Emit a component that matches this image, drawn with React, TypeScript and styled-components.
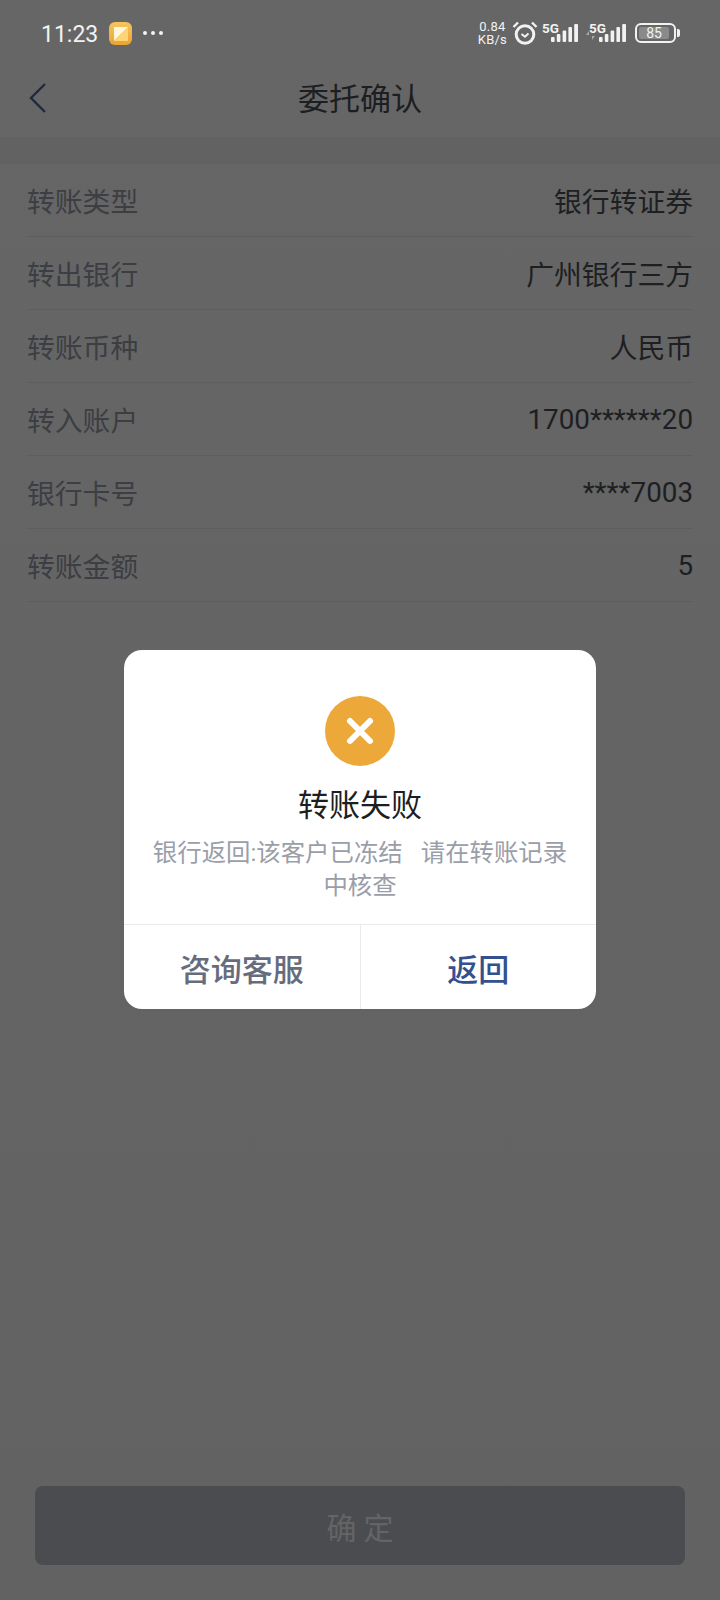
import React from 'react';
import styled, { createGlobalStyle } from 'styled-components';

const rows = [
  { label: '转账类型', value: '银行转证券' },
  { label: '转出银行', value: '广州银行三方' },
  { label: '转账币种', value: '人民币' },
  { label: '转入账户', value: '1700******20' },
  { label: '银行卡号', value: '****7003' },
  { label: '转账金额', value: '5' },
];

const SignalBars: React.FC = () => (
  <svg width="27" height="18" viewBox="0 0 27 18" fill="#f2f2f2">
    <rect x="0" y="13" width="3.600" height="5" rx="1" />
    <rect x="5.800" y="10" width="3.600" height="8" rx="1" />
    <rect x="11.600" y="6.500" width="3.600" height="11.500" rx="1" />
    <rect x="17.400" y="3" width="3.600" height="15" rx="1" />
    <rect x="23.200" y="0" width="3.800" height="18" rx="1" />
  </svg>
);

const App: React.FC = () => {
  return (
    <StyledPage>
      <GlobalStyle />
      <StyledStatusBar>
        <StyledTime>11:23</StyledTime>
        <StyledAppIcon>
          <svg width="14" height="14" viewBox="0 0 14 14">
            <path d="M0 0h14L0 14z" fill="#fff6dc" />
            <path d="M14 0v14H0z" fill="#fbd476" />
          </svg>
        </StyledAppIcon>
        <StyledDots>
          <i />
          <i />
          <i />
        </StyledDots>
        <StyledStatusRight>
          <StyledSpeed>
            <span>0.84</span>
            <span>KB/s</span>
          </StyledSpeed>
          <StyledAlarm width="26" height="24" viewBox="0 0 26 24" fill="none" stroke="#f2f2f2">
            <circle cx="13" cy="13.500" r="8.800" strokeWidth="3" />
            <path d="M9.500 13l3.500 2.800 3.500-3.300" strokeWidth="2" />
            <path d="M1.500 6l4.500-4.500M24.500 6L20 1.500" strokeWidth="2.400" />
          </StyledAlarm>
          <StyledSignal>
            <StyledFiveG>5G</StyledFiveG>
            <SignalBars />
          </StyledSignal>
          <StyledSignal wide>
            <StyledFiveG wide>5G</StyledFiveG>
            <StyledDataArrows width="10" height="14" viewBox="0 0 10 14">
              <path d="M3 14V7H0l3-4 0 0zM6 0v8h3l-3 4z" fill="#a8a8a8" />
            </StyledDataArrows>
            <SignalBars />
          </StyledSignal>
          <StyledBattery>
            <StyledBatteryBody>
              <StyledBatteryLevel>85</StyledBatteryLevel>
            </StyledBatteryBody>
            <StyledBatteryTip />
          </StyledBattery>
        </StyledStatusRight>
      </StyledStatusBar>

      <StyledNavBar>
        <StyledBack width="20" height="32" viewBox="0 0 20 32" fill="none">
          <path d="M17 2L3 16l14 14" stroke="#20293d" strokeWidth="2.400" />
        </StyledBack>
        <StyledNavTitle>委托确认</StyledNavTitle>
      </StyledNavBar>
      <StyledBand />

      <StyledList>
        {rows.map((row) => (
          <StyledRow key={row.label}>
            <StyledLabel>{row.label}</StyledLabel>
            <StyledValue>{row.value}</StyledValue>
          </StyledRow>
        ))}
      </StyledList>

      <StyledFooter>
        <StyledConfirm>确定</StyledConfirm>
      </StyledFooter>

      <StyledDialog>
        <StyledDialogBody>
          <StyledFailIcon>
            <svg width="30" height="30" viewBox="0 0 30 30">
              <path d="M5 5l20 20M25 5L5 25" stroke="#fff" strokeWidth="6" strokeLinecap="round" />
            </svg>
          </StyledFailIcon>
          <StyledDialogTitle>转账失败</StyledDialogTitle>
          <StyledDialogText>银行返回:该客户已冻结&nbsp;&nbsp;&nbsp;请在转账记录中核查</StyledDialogText>
        </StyledDialogBody>
        <StyledDialogActions>
          <StyledAction>咨询客服</StyledAction>
          <StyledAction primary>返回</StyledAction>
        </StyledDialogActions>
      </StyledDialog>
    </StyledPage>
  );
};
export default App;

const cjk = 'Roboto, "Noto Sans CJK SC", sans-serif';

const GlobalStyle = createGlobalStyle`
  html, body {
    margin: 0;
    padding: 0;
    background: #646464;
  }
`;

const StyledPage = styled.div`
  position: relative;
  width: 720px;
  height: 1600px;
  overflow: hidden;
  display: flex;
  flex-direction: column;
  background: linear-gradient(#666666, #626262);
  font-family: ${cjk};
`;

const StyledStatusBar = styled.div`
  height: 66px;
  box-sizing: border-box;
  padding: 0 40px 0 41px;
  display: flex;
  align-items: center;
  color: #f2f2f2;
`;

const StyledTime = styled.span`
  margin-top: 2px;
  font-size: 23px;
  width: 68px;
`;

const StyledAppIcon = styled.span`
  margin-top: 1px;
  width: 23px;
  height: 23px;
  border-radius: 6px;
  background: linear-gradient(#f6c460, #eda32f);
  display: flex;
  align-items: center;
  justify-content: center;
`;

const StyledDots = styled.span`
  display: flex;
  gap: 4px;
  margin-left: 11px;

  i {
    width: 4px;
    height: 4px;
    border-radius: 50%;
    background: #f2f2f2;
  }
`;

const StyledStatusRight = styled.div`
  margin-left: auto;
  display: flex;
  align-items: center;
  gap: 8px;
`;

const StyledSpeed = styled.div`
  margin-right: -3px;
  display: flex;
  flex-direction: column;
  align-items: center;
  font-size: 13px;
  line-height: 13px;
  letter-spacing: 0.2px;
`;

const StyledAlarm = styled.svg`
  margin-right: -4px;
`;

const StyledSignal = styled.div<{ wide?: boolean }>`
  position: relative;
  width: ${(props) => (props.wide ? '40px' : '36px')};
  height: 24px;
  box-sizing: border-box;
  padding-bottom: 3px;
  display: flex;
  align-items: flex-end;
  justify-content: flex-end;
`;

const StyledFiveG = styled.span<{ wide?: boolean }>`
  position: absolute;
  left: ${(props) => (props.wide ? '3px' : '0')};
  top: 0;
  font-size: 13.500px;
  font-weight: 700;
  line-height: 14px;
`;

const StyledDataArrows = styled.svg`
  position: absolute;
  left: 0;
  bottom: 3px;
`;

const StyledBattery = styled.div`
  display: flex;
  align-items: center;
  gap: 1px;
  margin-left: 1px;
`;

const StyledBatteryBody = styled.div`
  width: 41px;
  height: 20px;
  box-sizing: border-box;
  border: 2px solid #f2f2f2;
  border-radius: 6px;
  padding: 2px;
  display: flex;
`;

const StyledBatteryLevel = styled.div`
  flex: 1;
  margin-right: 3px;
  border-radius: 2px;
  background: #8a8a8a;
  font-size: 14px;
  line-height: 12px;
  text-align: center;
`;

const StyledBatteryTip = styled.div`
  width: 3px;
  height: 8px;
  border-radius: 0 2px 2px 0;
  background: #f2f2f2;
`;

const StyledNavBar = styled.div`
  position: relative;
  height: 71px;
  box-sizing: border-box;
  padding-bottom: 4px;
  display: flex;
  align-items: center;
  justify-content: center;
`;

const StyledBack = styled.svg`
  position: absolute;
  left: 28px;
  top: 16px;
`;

const StyledNavTitle = styled.div`
  font-size: 31px;
  line-height: 44px;
  color: #1c1e22;
`;

const StyledBand = styled.div`
  height: 27px;
  background: #626262;
`;

const StyledList = styled.div`
  padding: 0 27px;
`;

const StyledRow = styled.div`
  height: 73px;
  box-sizing: border-box;
  display: flex;
  align-items: center;
  justify-content: space-between;
  border-bottom: 1px solid #5e5e5e;
`;

const StyledLabel = styled.span`
  font-size: 27.800px;
  color: #3c3e43;
`;

const StyledValue = styled.span`
  font-size: 27.800px;
  color: #1e1f22;
`;

const StyledFooter = styled.div`
  margin-top: auto;
  padding: 0 35px 35px;
`;

const StyledConfirm = styled.div`
  height: 79px;
  border-radius: 8px;
  background: #4b4c4f;
  color: #636466;
  font-size: 30px;
  letter-spacing: 7px;
  text-indent: 7px;
  display: flex;
  align-items: center;
  justify-content: center;
`;

const StyledDialog = styled.div`
  position: absolute;
  left: 124px;
  top: 650px;
  width: 472px;
  height: 359px;
  border-radius: 18px;
  background: #fff;
  display: flex;
  flex-direction: column;
  overflow: hidden;
`;

const StyledDialogBody = styled.div`
  flex: 1;
  padding: 46px 24px 0;
  display: flex;
  flex-direction: column;
  align-items: center;
`;

const StyledFailIcon = styled.div`
  width: 70px;
  height: 70px;
  border-radius: 50%;
  background: #eca93a;
  display: flex;
  align-items: center;
  justify-content: center;
`;

const StyledDialogTitle = styled.div`
  margin-top: 18px;
  font-size: 31px;
  line-height: 44px;
  color: #1c1e22;
`;

const StyledDialogText = styled.div`
  margin-top: 8px;
  font-size: 24.400px;
  line-height: 33px;
  text-align: center;
  color: #9a9ea8;
`;

const StyledDialogActions = styled.div`
  height: 84px;
  display: flex;
  border-top: 1px solid #e9eaec;
`;

const StyledAction = styled.div<{ primary?: boolean }>`
  flex: 1;
  display: flex;
  align-items: center;
  justify-content: center;
  font-size: 31px;
  font-weight: 500;
  color: ${(props) => (props.primary ? '#33508f' : '#666c7b')};
  & + & {
    border-left: 1px solid #e9eaec;
  }
`;
